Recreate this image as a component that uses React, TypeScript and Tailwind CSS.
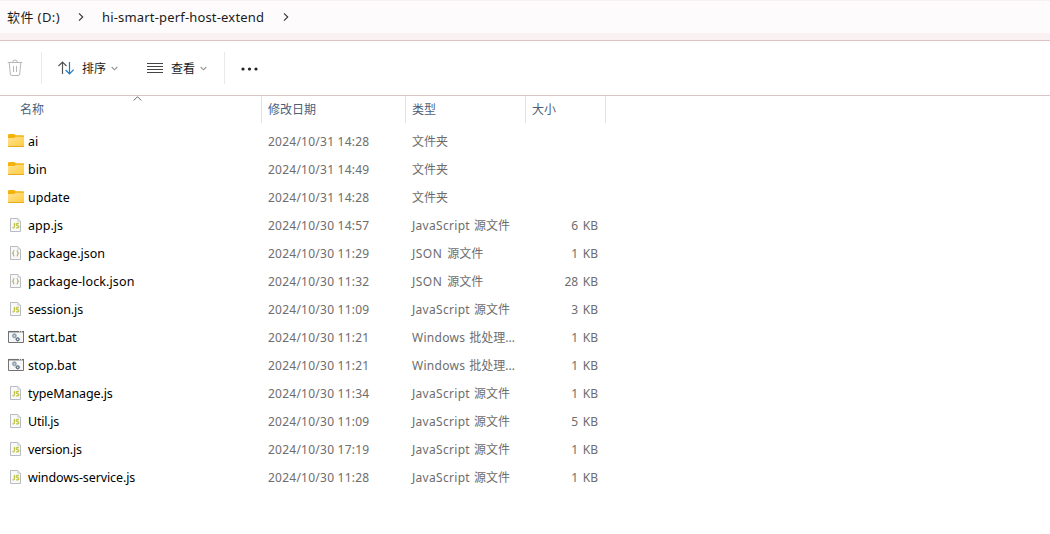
import type { ReactNode } from "react";

type Kind = "folder" | "js" | "json" | "bat";

interface Entry {
  name: string;
  kind: Kind;
  date: string;
  size?: string;
  tracking: string;
}

const entries: Entry[] = [
  { name: "ai", kind: "folder", date: "2024/10/31 14:28", tracking: "tracking-normal" },
  { name: "bin", kind: "folder", date: "2024/10/31 14:49", tracking: "tracking-normal" },
  { name: "update", kind: "folder", date: "2024/10/31 14:28", tracking: "tracking-normal" },
  { name: "app.js", kind: "js", date: "2024/10/30 14:57", size: "6", tracking: "tracking-normal" },
  { name: "package.json", kind: "json", date: "2024/10/30 11:29", size: "1", tracking: "tracking-normal" },
  { name: "package-lock.json", kind: "json", date: "2024/10/30 11:32", size: "28", tracking: "tracking-[0.12px]" },
  { name: "session.js", kind: "js", date: "2024/10/30 11:09", size: "3", tracking: "tracking-[-0.1px]" },
  { name: "start.bat", kind: "bat", date: "2024/10/30 11:21", size: "1", tracking: "tracking-[-0.15px]" },
  { name: "stop.bat", kind: "bat", date: "2024/10/30 11:21", size: "1", tracking: "tracking-[-0.02px]" },
  { name: "typeManage.js", kind: "js", date: "2024/10/30 11:34", size: "1", tracking: "tracking-[-0.1px]" },
  { name: "Util.js", kind: "js", date: "2024/10/30 11:09", size: "5", tracking: "tracking-[-0.25px]" },
  { name: "version.js", kind: "js", date: "2024/10/30 17:19", size: "1", tracking: "tracking-[-0.18px]" },
  { name: "windows-service.js", kind: "js", date: "2024/10/30 11:28", size: "1", tracking: "tracking-[-0.1px]" },
];

const kindLabel: Record<Kind, [string, string]> = {
  folder: ["", "文件夹"],
  js: ["JavaScript", "源文件"],
  json: ["JSON", "源文件"],
  bat: ["Windows", "批处理..."],
};

function FolderIcon() {
  return (
    <svg width="16" height="16" viewBox="0 0 16 16">
      <defs>
        <linearGradient id="folder" x1="0" y1="0" x2="1" y2="1">
          <stop offset="0" stopColor="#ffe394" />
          <stop offset="1" stopColor="#ffcb3d" />
        </linearGradient>
      </defs>
      <path d="M0 2.2Q0 1 1.2 1H6L8 2.2H15Q16 2.2 16 3.2V6H0Z" fill="#f5b20d" />
      <path d="M0 5H6.2L7.8 3.8H15.2Q16 3.8 16 4.6V13Q16 14 15 14H1Q0 14 0 13Z" fill="url(#folder)" />
      <path d="M.2 13.5H15.8" stroke="#eaaa20" strokeWidth="1" />
    </svg>
  );
}

function PageIcon({ children }: { children: ReactNode }) {
  return (
    <svg width="16" height="16" viewBox="0 0 16 16">
      <path d="M2.5 1.5H9.8L12.5 4.2V14.5H2.5Z" fill="#f8f8f8" stroke="#b9bcc0" />
      <path d="M9.8 1.5V4.2H12.5" fill="#dfe2e4" stroke="#c5c9cc" strokeWidth=".8" />
      {children}
    </svg>
  );
}

function FileIcon({ kind }: { kind: Kind }) {
  if (kind === "folder") return <FolderIcon />;
  if (kind === "js")
    return (
      <PageIcon>
        <path d="M6.4 6V9.8Q6.4 10.8 5.4 10.8H4.4M10.8 6.5H9.4Q8.2 6.5 8.2 7.5T9.5 8.6T10.8 9.7T9.5 10.8H8" fill="none" stroke="#bfc548" strokeWidth="1.3" />
      </PageIcon>
    );
  if (kind === "json")
    return (
      <PageIcon>
        <path d="M6.4 5.5Q5.4 5.5 5.4 6.6V7.3L4.5 8.2L5.4 9.1V10Q5.4 11 6.4 11M8.6 5.5Q9.6 5.5 9.6 6.6V7.3L10.5 8.2L9.6 9.1V10Q9.6 11 8.6 11" fill="none" stroke="#b4b46c" strokeWidth="1.1" />
      </PageIcon>
    );
  return (
    <svg width="16" height="16" viewBox="0 0 16 16">
      <path d="M.5 2.5H15.5V13.5H.5Z" fill="#f7f7f7" stroke="#747474" />
      <path d="M0 2.7H16" stroke="#707070" strokeWidth="1.5" />
      <path d="M11 2.7H12M13 2.7H14" stroke="#fff" strokeWidth=".9" />
      <circle cx="6.4" cy="6.8" r="1.6" fill="#d4dde3" stroke="#8d9da9" strokeWidth="1.5" />
      <path d="M6.4 4.2V5M6.4 8.4V9.3M3.9 6.8H4.8" stroke="#a5b0b8" />
      <circle cx="9.7" cy="10.2" r="1.4" fill="#e7edf0" stroke="#657582" strokeWidth="1.3" />
      <path d="M9.7 8V8.7M9.7 11.7V12.6M7.4 10.2H8.2M11.3 10.2H12.1" stroke="#74818b" />
    </svg>
  );
}

function Chevron() {
  return (
    <svg width="7" height="5" viewBox="0 0 7 5" fill="none" stroke="#949494" strokeWidth="1.1">
      <path d="M.7 1L3.5 3.8L6.3 1" />
    </svg>
  );
}

function Crumb() {
  return (
    <svg width="6" height="10" viewBox="0 0 6 10" fill="none" stroke="#3c3c3c" strokeWidth="1.2">
      <path d="M1 1.3L4.7 5L1 8.7" />
    </svg>
  );
}

export default function App() {
  return (
    <div className="h-[534px] w-[1050px] overflow-hidden bg-white font-['Noto_Sans','Noto_Sans_CJK_SC',sans-serif] text-[12px] leading-[18px] text-[#1b1b1b]">
      <div className="h-[41px] border-b border-[#dcc4c5] bg-[#f9f1f2]">
        <nav className="flex h-[33px] items-center border-t border-[#f8f1f2] bg-[#fdfbfc] pl-[7px]">
          <span className="w-[71px] whitespace-nowrap text-[13px] tracking-[0.4px]">软件 (D:)</span>
          <Crumb />
          <span className="ml-[18px] w-[181px] whitespace-nowrap text-[13px] tracking-[0.17px]">hi-smart-perf-host-extend</span>
          <Crumb />
        </nav>
      </div>

      <div className="flex h-[55px] items-center border-b border-[#d8c3c5]">
        <svg className="ml-[7px]" width="16" height="18" viewBox="0 0 16 18" fill="none" stroke="#b8b8b8">
          <path d="M.7 3.5H15.3M5.7 3.5Q5.7 1 8 1T10.3 3.5M2.2 3.5L3.3 15Q3.5 16.5 5 16.5H11Q12.5 16.5 12.7 15L13.8 3.5M6.5 7V13M9.5 7V13" />
        </svg>
        <div className="ml-[18px] h-8 w-px bg-[#e9e9e9]" />
        <svg className="ml-[16px]" width="17" height="14" viewBox="0 0 17 14" fill="none" strokeWidth="1.2">
          <path d="M4.5 13V1M.5 5L4.5 1L8.5 5" stroke="#555" />
          <path d="M11.5 1V13M7.7 9L11.5 12.8L15.6 8.7" stroke="#1679c9" />
        </svg>
        <span className="ml-[7px] pt-[2px]">排序</span>
        <span className="ml-[5px] flex"><Chevron /></span>
        <svg className="ml-[29px]" width="16" height="12" viewBox="0 0 16 12" stroke="#454545">
          <path d="M0 1.5H16M0 4.5H16M0 7.5H16M0 10.5H16" />
        </svg>
        <span className="ml-[8px] pt-[2px]">查看</span>
        <span className="ml-[5px] flex"><Chevron /></span>
        <div className="ml-[17px] h-8 w-px bg-[#e9e9e9]" />
        <svg className="ml-[16px] mt-[2px]" width="17" height="4" viewBox="0 0 17 4" fill="#222">
          <circle cx="2" cy="2" r="1.6" /><circle cx="8.5" cy="2" r="1.6" /><circle cx="15" cy="2" r="1.6" />
        </svg>
      </div>

      <div className="grid h-8 grid-cols-[262px_144px_120px_80px] items-start text-[#4c607a]">
        <div className="relative flex h-[27px] items-center border-r border-[#e2e2e2] pl-5">
          名称
          <svg className="absolute left-[133px] top-0" width="9" height="6" viewBox="0 0 9 6" fill="none" stroke="#666">
            <path d="M.7 4.5L4.5 .7L8.3 4.5" />
          </svg>
        </div>
        <div className="flex h-[27px] items-center border-r border-[#e2e2e2] pl-1.5">修改日期</div>
        <div className="flex h-[27px] items-center border-r border-[#e2e2e2] pl-1.5">类型</div>
        <div className="flex h-[27px] items-center border-r border-[#e2e2e2] pl-1.5">大小</div>
      </div>

      {entries.map((entry) => {
        const [latin, chinese] = kindLabel[entry.kind];
        return (
          <div key={entry.name} className="grid h-7 grid-cols-[268px_144px_108px_78px] items-center whitespace-nowrap text-[#6d6d6d]">
            <div className="flex items-center gap-1 pl-2 text-black">
              <span className="pb-[2px]">
                <FileIcon kind={entry.kind} />
              </span>
              <span className={`text-[12.5px] ${entry.tracking}`}>{entry.name}</span>
            </div>
            <span className="tracking-[0.24px]">{entry.date}</span>
            <span>
              {latin && <span className={entry.kind === "json" ? "mr-[5px] tracking-[0.5px]" : "mr-1 tracking-[0.3px]"}>{latin}</span>}
              {chinese}
            </span>
            <span className="text-right [word-spacing:1.5px]">{entry.size && `${entry.size} KB`}</span>
          </div>
        );
      })}
    </div>
  );
}
